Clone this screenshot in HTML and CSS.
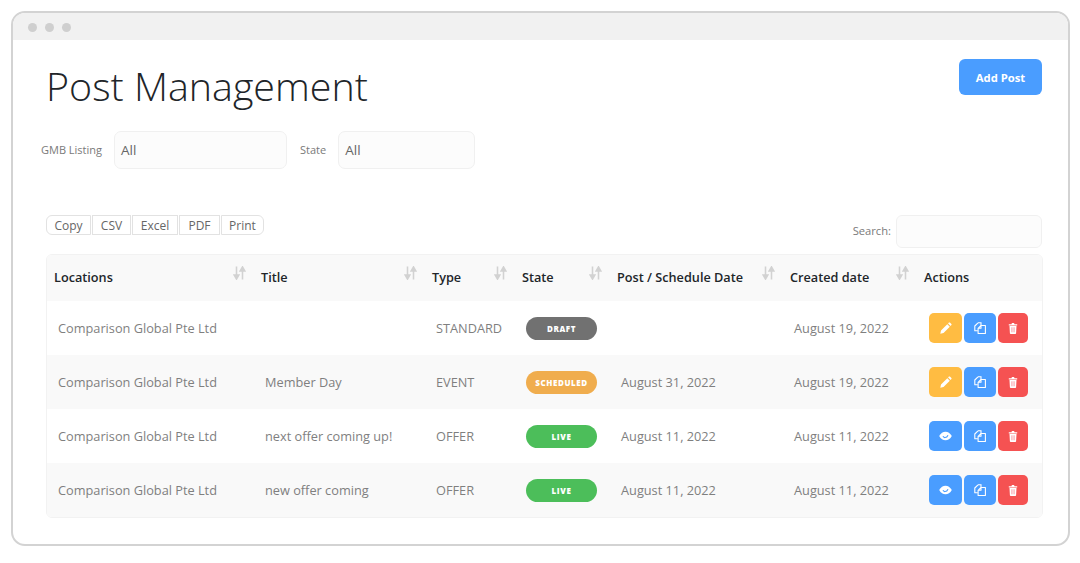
FILE: index.html
```html
<!DOCTYPE html>
<html lang="en">
<head>
<meta charset="utf-8">
<title>Post Management</title>
<link rel="stylesheet" href="styles.css">
</head>
<body>
<svg class="defs" width="0" height="0" aria-hidden="true">
  <defs>
    <symbol id="i-sort" viewBox="0 0 13 14">
      <path d="M3.500 0.500v9.500M1.200 9l2.300 4 2.300-4z" fill="currentColor" stroke="currentColor" stroke-width="1.600"/>
      <path d="M9.500 13.500v-9.500M7.200 5l2.300-4 2.300 4z" fill="currentColor" stroke="currentColor" stroke-width="1.600"/>
    </symbol>
    <symbol id="i-pen" viewBox="0 0 12 12">
      <path d="M0.300 11.700l0.700-3.200 6.300-6.300 2.500 2.500-6.300 6.300zM8.100 1.400l0.800-0.800c0.300-0.300 0.700-0.300 1 0l1.500 1.500c0.300 0.300 0.300 0.700 0 1l-0.800 0.800z" fill="currentColor"/>
    </symbol>
    <symbol id="i-copy" viewBox="0 0 12 12">
      <path d="M4 0.800L0.800 4v4.700h3" fill="none" stroke="currentColor" stroke-width="1.100" stroke-linejoin="round"/>
      <path d="M4 0.800h3v2.600" fill="none" stroke="currentColor" stroke-width="1.100"/>
      <path d="M7 3.500h4.400v8H4.100V6.300zM7 3.500v2.800H4.100" fill="none" stroke="currentColor" stroke-width="1.100" stroke-linejoin="round"/>
    </symbol>
    <symbol id="i-trash" viewBox="0 0 12 12">
      <path d="M1.800 2.200h2.700l0.400-1.200h2.200l0.400 1.200h2.700v1.200H1.800zM2.500 4h7l-0.400 7.200c0 0.500-0.300 0.800-0.800 0.800H3.700c-0.500 0-0.800-0.300-0.800-0.800z" fill="currentColor"/>
      <path d="M4.700 5.300v5M6 5.300v5M7.300 5.300v5" stroke="#f9a3ac" stroke-width="0.800"/>
    </symbol>
    <symbol id="i-eye" viewBox="0 0 14 12">
      <path d="M0.200 6C2 2.800 4.300 1.300 7 1.300S12 2.800 13.800 6C12 9.200 9.700 10.700 7 10.700S2 9.200 0.200 6z" fill="currentColor"/>
      <path d="M4.300 6.200c0.700 2 3.800 2.300 5.400-1" fill="none" stroke="#4a9dff" stroke-width="1.200"/>
    </symbol>
  </defs>
</svg>
<div class="window">
  <div class="chrome">
    <span class="dot"></span><span class="dot"></span><span class="dot"></span>
  </div>
  <main class="content">
    <header class="page-head">
      <h1>Post Management</h1>
      <button class="add-post" type="button">Add Post</button>
    </header>
    <div class="filters">
      <label class="filter-label">GMB Listing</label>
      <div class="select select-wide">All</div>
      <label class="filter-label filter-state">State</label>
      <div class="select select-narrow">All</div>
    </div>
    <div class="toolbar">
      <div class="exports">
        <button type="button" class="exp exp-copy">Copy</button>
        <button type="button" class="exp exp-csv">CSV</button>
        <button type="button" class="exp exp-excel">Excel</button>
        <button type="button" class="exp exp-pdf">PDF</button>
        <button type="button" class="exp exp-print">Print</button>
      </div>
      <div class="search">
        <span class="search-label">Search:</span>
        <div class="search-box"></div>
      </div>
    </div>
    <div class="table-wrap">
      <table>
        <thead>
          <tr>
            <th class="c1"><div class="th"><span>Locations</span><svg class="sort"><use href="#i-sort"/></svg></div></th>
            <th class="c2"><div class="th"><span>Title</span><svg class="sort"><use href="#i-sort"/></svg></div></th>
            <th class="c3"><div class="th"><span>Type</span><svg class="sort"><use href="#i-sort"/></svg></div></th>
            <th class="c4"><div class="th"><span>State</span><svg class="sort"><use href="#i-sort"/></svg></div></th>
            <th class="c5"><div class="th"><span>Post / Schedule Date</span><svg class="sort"><use href="#i-sort"/></svg></div></th>
            <th class="c6"><div class="th"><span>Created date</span><svg class="sort"><use href="#i-sort"/></svg></div></th>
            <th class="c7"><div class="th"><span>Actions</span></div></th>
          </tr>
        </thead>
        <tbody>
          <tr>
            <td>Comparison Global Pte Ltd</td><td></td><td>STANDARD</td>
            <td><span class="pill draft">DRAFT</span></td>
            <td></td><td>August 19, 2022</td>
            <td><div class="actions">
              <button type="button" class="act a-w yellow"><svg class="ic"><use href="#i-pen"/></svg></button>
              <button type="button" class="act a-m blue"><svg class="ic"><use href="#i-copy"/></svg></button>
              <button type="button" class="act a-n red"><svg class="ic"><use href="#i-trash"/></svg></button>
            </div></td>
          </tr>
          <tr>
            <td>Comparison Global Pte Ltd</td><td>Member Day</td><td>EVENT</td>
            <td><span class="pill scheduled">SCHEDULED</span></td>
            <td>August 31, 2022</td><td>August 19, 2022</td>
            <td><div class="actions">
              <button type="button" class="act a-w yellow"><svg class="ic"><use href="#i-pen"/></svg></button>
              <button type="button" class="act a-m blue"><svg class="ic"><use href="#i-copy"/></svg></button>
              <button type="button" class="act a-n red"><svg class="ic"><use href="#i-trash"/></svg></button>
            </div></td>
          </tr>
          <tr>
            <td>Comparison Global Pte Ltd</td><td>next offer coming up!</td><td>OFFER</td>
            <td><span class="pill live">LIVE</span></td>
            <td>August 11, 2022</td><td>August 11, 2022</td>
            <td><div class="actions">
              <button type="button" class="act a-w blue"><svg class="ic ic-eye"><use href="#i-eye"/></svg></button>
              <button type="button" class="act a-m blue"><svg class="ic"><use href="#i-copy"/></svg></button>
              <button type="button" class="act a-n red"><svg class="ic"><use href="#i-trash"/></svg></button>
            </div></td>
          </tr>
          <tr>
            <td>Comparison Global Pte Ltd</td><td>new offer coming</td><td>OFFER</td>
            <td><span class="pill live">LIVE</span></td>
            <td>August 11, 2022</td><td>August 11, 2022</td>
            <td><div class="actions">
              <button type="button" class="act a-w blue"><svg class="ic ic-eye"><use href="#i-eye"/></svg></button>
              <button type="button" class="act a-m blue"><svg class="ic"><use href="#i-copy"/></svg></button>
              <button type="button" class="act a-n red"><svg class="ic"><use href="#i-trash"/></svg></button>
            </div></td>
          </tr>
        </tbody>
      </table>
    </div>
  </main>
</div>
</body>
</html>
```

FILE: styles.css
```css
* { box-sizing: border-box; }
html, body { height: 100%; }
body {
  margin: 0;
  padding: 11px 10px 0 11px;
  background: #fff;
  font-family: "Open Sans", sans-serif;
  color: #777;
  overflow: hidden;
}
.defs { position: absolute; }
.window {
  height: 535px;
  border: 2px solid #d3d3d3;
  border-radius: 14px;
  overflow: hidden;
  background: #fff;
}
.chrome {
  height: 27px;
  background: #f1f1f1;
  display: flex;
  align-items: center;
  gap: 8px;
  padding: 2px 0 0 15px;
}
.dot { width: 9px; height: 9px; border-radius: 50%; background: #cfcfcf; }
.content { padding: 19px 26px 0 33px; }
.page-head {
  display: flex;
  justify-content: space-between;
  align-items: flex-start;
  height: 72px;
}
h1 {
  margin: 0;
  font-weight: 300;
  font-size: 39.4px;
  line-height: 54px;
  color: #212529;
}
.add-post {
  width: 83px;
  height: 36px;
  border: 0;
  border-radius: 6px;
  background: #4a9dff;
  color: #fff;
  font: 700 11.25px "Open Sans", sans-serif;
}
.filters { display: flex; align-items: center; height: 38px; margin-left: -5px; }
.filter-label { font-size: 11px; color: #7a7a7a; position: relative; top: -1px; }
.filter-state { margin-left: 13px; }
.select {
  height: 38px;
  margin-left: 12px;
  padding-left: 6px;
  border: 1px solid #f0f0f0;
  border-radius: 7px;
  background: #fcfcfc;
  font-size: 13.5px;
  line-height: 37px;
  color: #666;
}
.select-wide { width: 173px; }
.select-narrow { width: 137px; }
.toolbar {
  display: flex;
  justify-content: space-between;
  align-items: flex-start;
  margin-top: 46px;
  height: 39px;
}
.exports { display: flex; gap: 1px; }
.exp {
  height: 20px;
  padding: 0;
  border: 1px solid #e2e2e2;
  background: #fff;
  font: 400 12px "Open Sans", sans-serif;
  color: #666;
}
.exp-copy { width: 45px; border-radius: 6px 0 0 6px; }
.exp-csv { width: 39px; }
.exp-excel { width: 46px; }
.exp-pdf { width: 41px; }
.exp-print { width: 43px; border-radius: 0 6px 6px 0; }
.search { display: flex; align-items: center; gap: 5px; height: 33px; }
.search-label { font-size: 11.2px; color: #7a7a7a; position: relative; top: -1px; }
.search-box {
  width: 146px;
  height: 33px;
  border: 1px solid #f0f0f0;
  border-radius: 6px;
  background: #fcfcfc;
}
.table-wrap {
  width: 997px;
  border: 1px solid #f2f2f2;
  border-radius: 6px;
  overflow: hidden;
}
table { width: 100%; border-collapse: collapse; table-layout: fixed; }
.c1 { width: 206px; }
.c2 { width: 171px; }
.c3 { width: 90px; }
.c4 { width: 95px; }
.c5 { width: 173px; }
.c6 { width: 134px; }
thead tr { background: #f9f9f9; height: 46px; }
th { padding: 0 7px 0 8px; text-align: left; }
th:first-child { padding-left: 7px; }
.th {
  display: flex;
  justify-content: space-between;
  align-items: flex-start;
  font-size: 12.7px;
  font-weight: 600;
  color: #212529;
  line-height: 18px;
}
.th span { white-space: nowrap; position: relative; top: -1px; }
.sort { width: 13px; height: 14px; color: #d2d2d2; margin-top: -3px; flex: none; }
tbody tr { height: 54px; }
tbody tr:nth-child(even) { background: #f9f9f9; }
td { padding: 0 8px 0 12px; font-size: 12.75px; color: #7f7f7f; white-space: nowrap; }
td:first-child { padding-left: 11px; }
td:last-child { padding-left: 13px; }
.pill {
  display: block;
  width: 71px;
  height: 23px;
  border-radius: 12px;
  text-align: center;
  font-size: 8px;
  font-weight: 800;
  line-height: 23px;
  letter-spacing: 0.6px;
  color: #fff;
}
.draft { background: #717171; }
.scheduled { background: #f0ad4e; }
.live { background: #4cbe5a; }
.actions { display: flex; gap: 2px; }
.act {
  height: 30px;
  padding: 0;
  border: 0;
  border-radius: 5px;
  color: #fff;
  display: flex;
  align-items: center;
  justify-content: center;
}
.a-w { width: 33px; }
.a-m { width: 32px; }
.a-n { width: 30px; }
.yellow { background: #ffbc42; }
.blue { background: #4a9dff; }
.red { background: #f55252; }
.ic { width: 12px; height: 12px; }
.ic-eye { width: 13px; height: 12px; }
```
